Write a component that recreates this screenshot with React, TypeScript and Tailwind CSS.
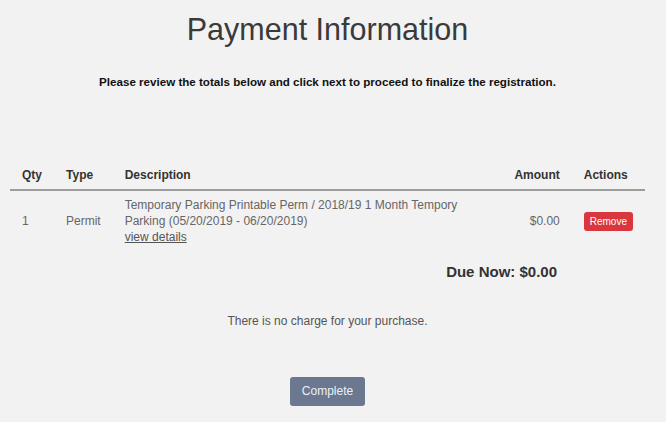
export default function App() {
    return (
        <div className="min-h-[422px] bg-[#f2f2f2] font-['Liberation_Sans',Arial,sans-serif]">
            <div className="w-[655px] px-[10px] pt-[12px]">
                <h1 className="text-center text-[30.5px] leading-[35px] text-[#3a3a3a]">
                    Payment Information
                </h1>
                <p className="mt-[27px] text-center text-[11.6px] font-bold leading-[16px] text-[#111]">
                    Please review the totals below and click next to proceed to finalize the registration.
                </p>

                <table className="mt-[69px] w-full border-collapse text-[12px] leading-[16px]">
                    <thead>
                        <tr className="border-b-2 border-[#9c9c9c] text-[#333]">
                            <th className="px-3 pt-2 pb-[6px] text-left font-bold">Qty</th>
                            <th className="px-3 pt-2 pb-[6px] text-left font-bold">Type</th>
                            <th className="px-3 pt-2 pb-[6px] text-left font-bold">Description</th>
                            <th className="px-3 pt-2 pb-[6px] text-right font-bold">Amount</th>
                            <th className="px-3 pt-2 pb-[6px] text-left font-bold">Actions</th>
                        </tr>
                    </thead>
                    <tbody className="text-[#666]">
                        <tr>
                            <td className="px-3 pt-[6px] pb-2 align-middle">1</td>
                            <td className="px-3 pt-[6px] pb-2 align-middle">Permit</td>
                            <td className="px-3 pt-[6px] pb-2 align-middle">
                                Temporary Parking Printable Perm / 2018/19 1 Month Tempory Parking (05/20/2019 - 06/20/2019)
                                <br />
                                <a className="text-[#555] underline">view details</a>
                            </td>
                            <td className="px-3 pt-[6px] pb-2 text-right align-middle">$0.00</td>
                            <td className="px-3 pt-[6px] pb-2 align-middle">
                                <button className="rounded-[3px] bg-[#d9363e] px-[6px] py-[3px] text-[10px] leading-[13px] text-white">
                                    Remove
                                </button>
                            </td>
                        </tr>
                    </tbody>
                </table>

                <div className="flex justify-end pt-[10px] pr-[88px]">
                    <span className="text-[15px] font-bold leading-[18px] text-[#333]">Due Now: $0.00</span>
                </div>

                <p className="mt-[32px] text-center text-[12px] leading-[16px] text-[#555]">
                    There is no charge for your purchase.
                </p>

                <div className="mt-[48px] flex justify-center">
                    <button className="rounded-[3px] bg-[#6b7890] px-[11.5px] py-[6px] text-[12px] leading-[17px] text-[#eef0f4]">
                        Complete
                    </button>
                </div>
            </div>
        </div>
    );
}
